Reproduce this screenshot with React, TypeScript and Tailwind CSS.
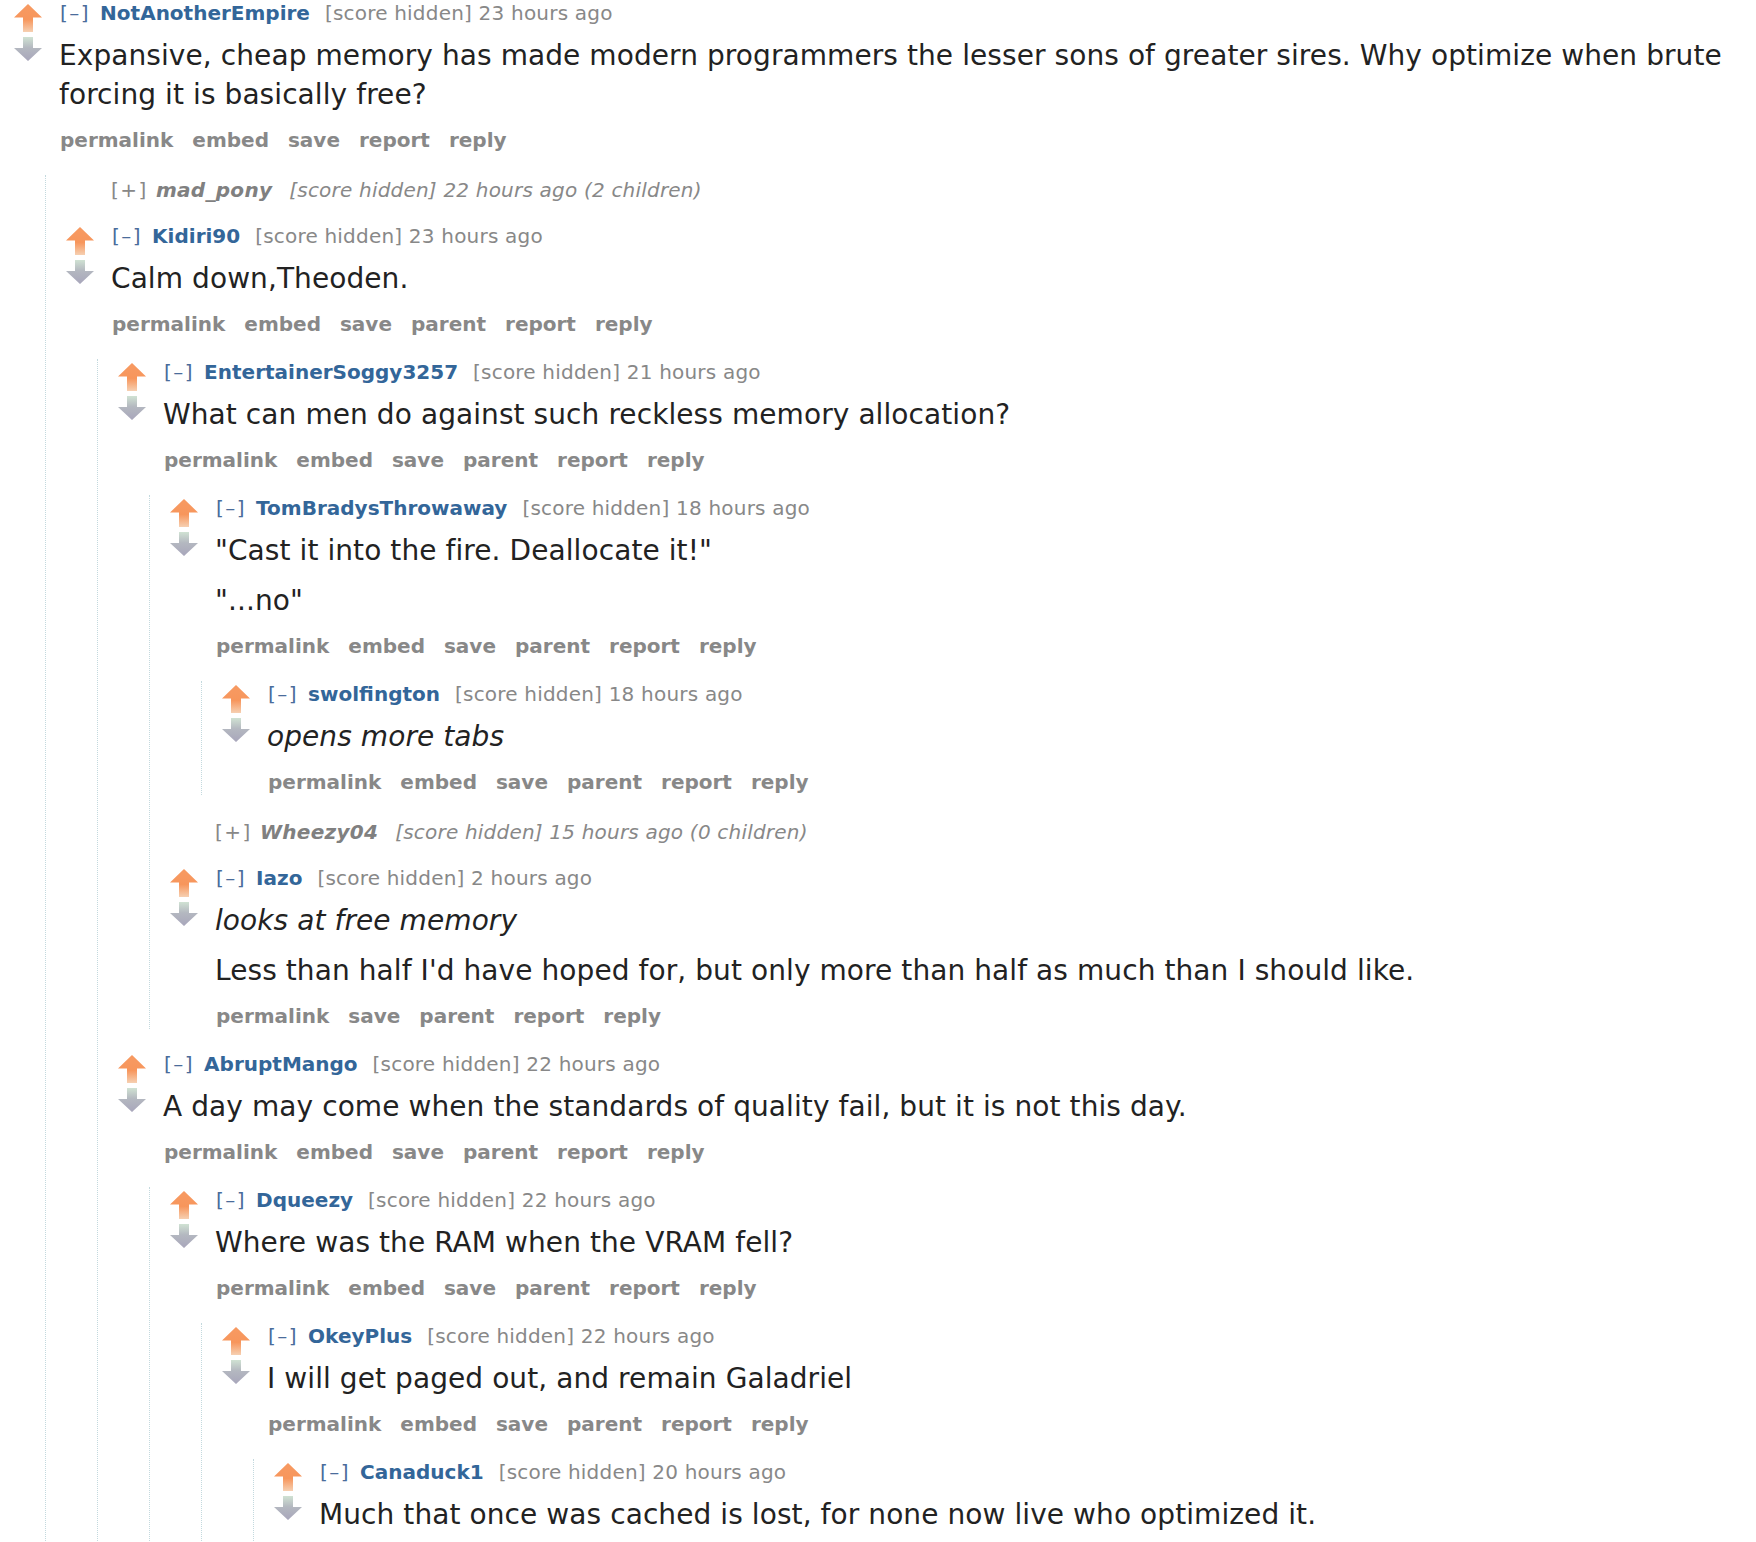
import React from "react";

type Para = { text: string; italic?: boolean };

type CommentData = {
  author: string;
  time: string;
  collapsed?: boolean;
  count?: string;
  body?: Para[];
  buttons?: string[];
  children?: CommentData[];
};

const rootButtons = ["permalink", "embed", "save", "report", "reply"];
const replyButtons = ["permalink", "embed", "save", "parent", "report", "reply"];

const thread: CommentData = {
  author: "NotAnotherEmpire",
  time: "23 hours ago",
  body: [
    {
      text: "Expansive, cheap memory has made modern programmers the lesser sons of greater sires. Why optimize when brute forcing it is basically free?",
    },
  ],
  buttons: rootButtons,
  children: [
    { author: "mad_pony", time: "22 hours ago", collapsed: true, count: "2 children" },
    {
      author: "Kidiri90",
      time: "23 hours ago",
      body: [{ text: "Calm down,Theoden." }],
      children: [
        {
          author: "EntertainerSoggy3257",
          time: "21 hours ago",
          body: [{ text: "What can men do against such reckless memory allocation?" }],
          children: [
            {
              author: "TomBradysThrowaway",
              time: "18 hours ago",
              body: [{ text: '"Cast it into the fire. Deallocate it!"' }, { text: '"...no"' }],
              children: [
                {
                  author: "swolfington",
                  time: "18 hours ago",
                  body: [{ text: "opens more tabs", italic: true }],
                },
              ],
            },
            { author: "Wheezy04", time: "15 hours ago", collapsed: true, count: "0 children" },
            {
              author: "Iazo",
              time: "2 hours ago",
              body: [
                { text: "looks at free memory", italic: true },
                {
                  text: "Less than half I'd have hoped for, but only more than half as much than I should like.",
                },
              ],
              buttons: ["permalink", "save", "parent", "report", "reply"],
            },
          ],
        },
        {
          author: "AbruptMango",
          time: "22 hours ago",
          body: [{ text: "A day may come when the standards of quality fail, but it is not this day." }],
          children: [
            {
              author: "Dqueezy",
              time: "22 hours ago",
              body: [{ text: "Where was the RAM when the VRAM fell?" }],
              children: [
                {
                  author: "OkeyPlus",
                  time: "22 hours ago",
                  body: [{ text: "I will get paged out, and remain Galadriel" }],
                  children: [
                    {
                      author: "Canaduck1",
                      time: "20 hours ago",
                      body: [
                        { text: "Much that once was cached is lost, for none now live who optimized it." },
                      ],
                    },
                  ],
                },
              ],
            },
          ],
        },
      ],
    },
  ],
};

const UpArrow = () => (
  <svg width="28" height="28" viewBox="0 0 28 28">
    <defs>
      <linearGradient id="upg" x1="0" y1="0" x2="0" y2="1">
        <stop offset="0" stopColor="#f79a62" />
        <stop offset="0.55" stopColor="#f7965c" />
        <stop offset="1" stopColor="#f6d0b2" />
      </linearGradient>
    </defs>
    <path d="M14 0 L28 13.5 L19 13.5 L19 28 L9 28 L9 13.5 L0 13.5 Z" fill="url(#upg)" />
  </svg>
);

const DownArrow = () => (
  <svg width="28" height="24" viewBox="0 0 28 24">
    <defs>
      <linearGradient id="downg" x1="0" y1="0" x2="0" y2="1">
        <stop offset="0" stopColor="#d0e2d3" />
        <stop offset="0.45" stopColor="#b4b8c0" />
        <stop offset="1" stopColor="#a8a6bb" />
      </linearGradient>
    </defs>
    <path d="M9 0 L19 0 L19 11 L28 11 L14 24 L0 11 L9 11 Z" fill="url(#downg)" />
  </svg>
);

const Collapsed = ({ c }: { c: CommentData }) => (
  <div className="pt-[4px] h-[26px] leading-[22px] text-[20px] whitespace-nowrap pl-[65px] text-[#888888]">
    <span className="tracking-[1.5px] mr-[8px]">[+]</span>
    <span className="italic font-bold text-[#808080] tracking-[0.3px] mr-[17px]">{c.author}</span>
    <span className="italic tracking-[0.2px]">[score hidden] {c.time} ({c.count})</span>
  </div>
);

const Comment = ({ c }: { c: CommentData }) => {
  if (c.collapsed) return <Collapsed c={c} />;
  const buttons = c.buttons ?? replyButtons;
  return (
    <div className="flex flex-col">
      <div className="flex">
        <div className="ml-[20px] w-[28px] shrink-0 flex flex-col">
          <div className="mt-[4px] h-[28px]">
            <UpArrow />
          </div>
          <div className="mt-[5px] h-[24px]">
            <DownArrow />
          </div>
        </div>
        <div className="ml-[18px] flex-1 min-w-0 pr-[10px]">
          <div className="h-[26px] leading-[26px] text-[20px] whitespace-nowrap">
            <span className="text-[#4a6c9b] tracking-[1.5px] mr-[10px]">[–]</span>
            <span className="font-bold text-[#336699] mr-[15px]">{c.author}</span>
            <span className="text-[#888888] tracking-[0.2px]">[score hidden] {c.time}</span>
          </div>
          <div className="mt-[10px] -ml-[1px] flex flex-col gap-[11px] text-[28px] leading-[39px] tracking-[0.08px] text-[#222222]">
            {c.body?.map((p, i) => (
              <p key={i} className={p.italic ? "italic" : ""}>
                {p.text}
              </p>
            ))}
          </div>
          <ul className="mt-[13px] h-[26px] leading-[26px] flex gap-[19px] text-[20px] font-bold text-[#888888]">
            {buttons.map((b) => (
              <li key={b}>{b}</li>
            ))}
          </ul>
        </div>
      </div>
      {c.children && (
        <div className="ml-[51px] mt-[22px] border-l border-dotted border-[#c3d9de] flex flex-col gap-[22px]">
          {c.children.map((child) => (
            <Comment key={child.author} c={child} />
          ))}
        </div>
      )}
    </div>
  );
};

export default function App() {
  return (
    <div className="w-[1756px] h-[1542px] overflow-hidden bg-white font-['DejaVu_Sans','Verdana',sans-serif]">
      <div className="-ml-[6px]">
        <Comment c={thread} />
      </div>
    </div>
  );
}
